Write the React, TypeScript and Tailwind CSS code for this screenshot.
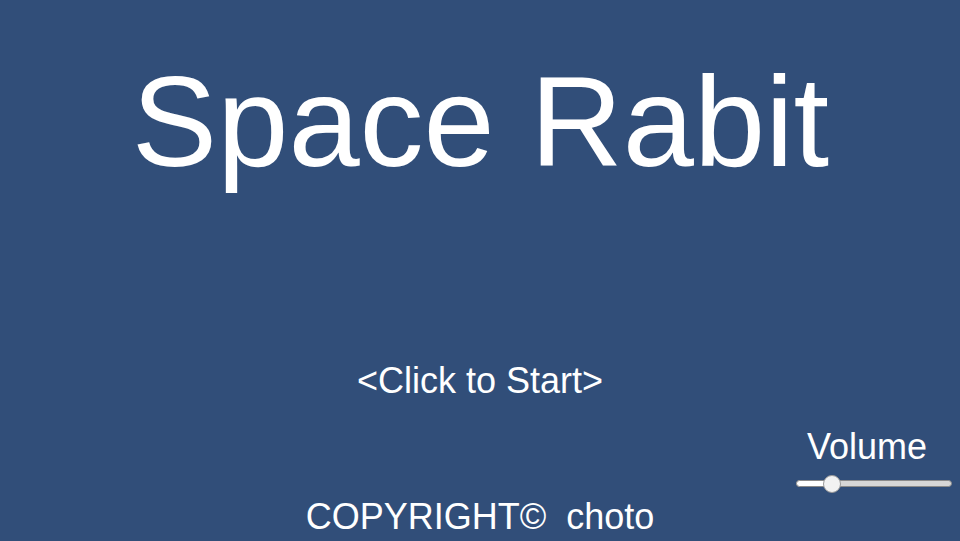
export default function App() {
  return (
    <div
      className="relative flex h-[541px] w-[960px] flex-col items-center overflow-hidden bg-[#314e79] text-white"
      style={{ fontFamily: '"Liberation Sans", Arial, sans-serif' }}
    >
      {/* Title */}
      <h1 className="mt-[58px] ml-[1px] text-[128px] leading-none font-normal">Space Rabit</h1>

      {/* Start prompt */}
      <button className="mt-[177px] text-[36px] leading-none">&lt;Click to Start&gt;</button>

      {/* Copyright */}
      <div className="mt-auto mb-[6px] whitespace-pre text-[36px] leading-none">COPYRIGHT©  choto</div>

      {/* Volume control */}
      <div className="absolute right-[8px] bottom-[48px] flex w-[156px] flex-col items-start">
        <span className="mb-[10px] ml-[11px] text-[36px] leading-none">Volume</span>
        <div className="relative h-[18px] w-[156px]">
          <div className="absolute top-[5px] left-0 right-0 h-[7px] rounded-full border border-[#8a8a8a] bg-[#d6d6d6]" />
          <div className="absolute top-[5px] left-0 h-[7px] w-[36px] rounded-full border border-[#8a8a8a] bg-white" />
          <div className="absolute top-0 left-[27px] h-[18px] w-[18px] rounded-full border border-[#9a9a9a] bg-[#f2f2f2]" />
        </div>
      </div>
    </div>
  );
}
